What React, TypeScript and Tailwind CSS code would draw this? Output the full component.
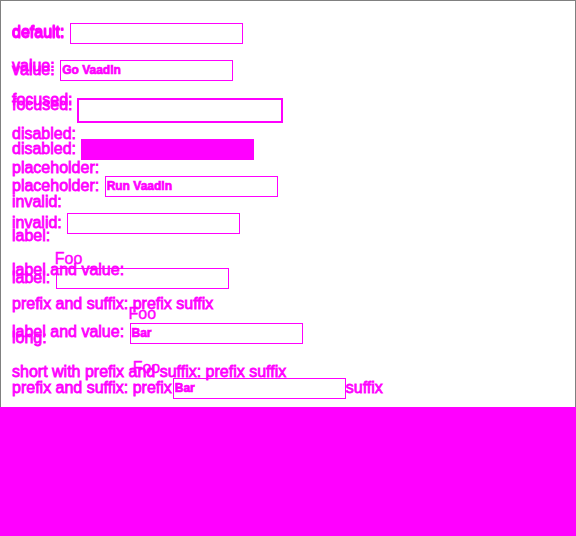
import React from 'react';

const font = "font-['Liberation_Sans',Arial,sans-serif]";

function Field({ children }: { children?: React.ReactNode }) {
  return (
    <div className="ml-[1px] w-[173px] h-[21px] border border-[#f0f] pl-[1px] pt-[2px] text-[12px] font-bold leading-[15px] whitespace-nowrap [-webkit-text-stroke:0.7px_#f0f]">
      {children}
    </div>
  );
}

function Foo() {
  return <div className="leading-[18px] [-webkit-text-stroke:0.4px_#f0f]">Foo</div>;
}

const lines = [
  'default:',
  'value:',
  'focused:',
  'disabled:',
  'placeholder:',
  'invalid:',
  'label:',
  'label and value:',
  'prefix and suffix: prefix suffix',
  'long:',
  'short with prefix and suffix: prefix suffix',
];

export default function App() {
  return (
    <div className={`w-[576px] h-[536px] flex flex-col bg-white ${font}`}>
      <div className="h-[407px] border-t border-x border-[#808080] grid overflow-hidden text-[16px] text-[#f0f] [-webkit-text-stroke:0.8px_#f0f]">
        {/* stacked labels */}
        <div className="[grid-area:1/1] pl-[11px] pt-[14px] leading-[34px]">
          {lines.map((l) => (
            <div key={l} className="whitespace-pre">
              {l}
            </div>
          ))}
        </div>

        {/* labels with fields */}
        <div className="[grid-area:1/1] pl-[11px] pt-[22px] flex flex-col">
          <div className="flex items-start h-[37px]">
            <span className="mt-[1px] leading-[18px] whitespace-pre">default: </span>
            <Field />
          </div>
          <div className="flex items-start h-[36px]">
            <span className="mt-[1px] leading-[18px] whitespace-pre">value: </span>
            <Field>Go Vaadin</Field>
          </div>
          <div className="flex items-start h-[43px]">
            <span className="leading-[18px] whitespace-pre">focused: </span>
            <div className="mt-[2px] w-[206px] h-[25px] border-2 border-[#f0f]" />
          </div>
          <div className="flex items-start h-[37px]">
            <span className="mt-[1px] leading-[18px] whitespace-pre">disabled: </span>
            <div className="w-[173px] h-[21px] bg-[#f0f]" />
          </div>
          <div className="flex items-start h-[37px]">
            <span className="mt-[1px] leading-[18px] whitespace-pre">placeholder: </span>
            <Field>Run Vaadin</Field>
          </div>
          <div className="flex items-start h-[37px]">
            <span className="mt-[1px] leading-[18px] whitespace-pre">invalid: </span>
            <Field />
          </div>
          <div className="flex items-start h-[55px]">
            <span className="mt-[19px] leading-[18px] whitespace-pre">label: </span>
            <div className="flex flex-col">
              <Foo />
              <Field />
            </div>
          </div>
          <div className="flex items-start h-[54px]">
            <span className="mt-[18px] leading-[18px] whitespace-pre">label and value: </span>
            <div className="flex flex-col">
              <Foo />
              <Field>Bar</Field>
            </div>
          </div>
          <div className="flex items-start">
            <span className="mt-[20px] leading-[18px] whitespace-pre">prefix and suffix: </span>
            <div className="flex flex-col">
              <Foo />
              <div className="flex items-start">
                <span className="mt-[2px] leading-[18px]">prefix</span>
                <div className="mt-[1px]">
                  <Field>Bar</Field>
                </div>
                <span className="mt-[2px] leading-[18px]">suffix</span>
              </div>
            </div>
          </div>
        </div>
      </div>
      <div className="flex-1 bg-[#f0f]" />
    </div>
  );
}
